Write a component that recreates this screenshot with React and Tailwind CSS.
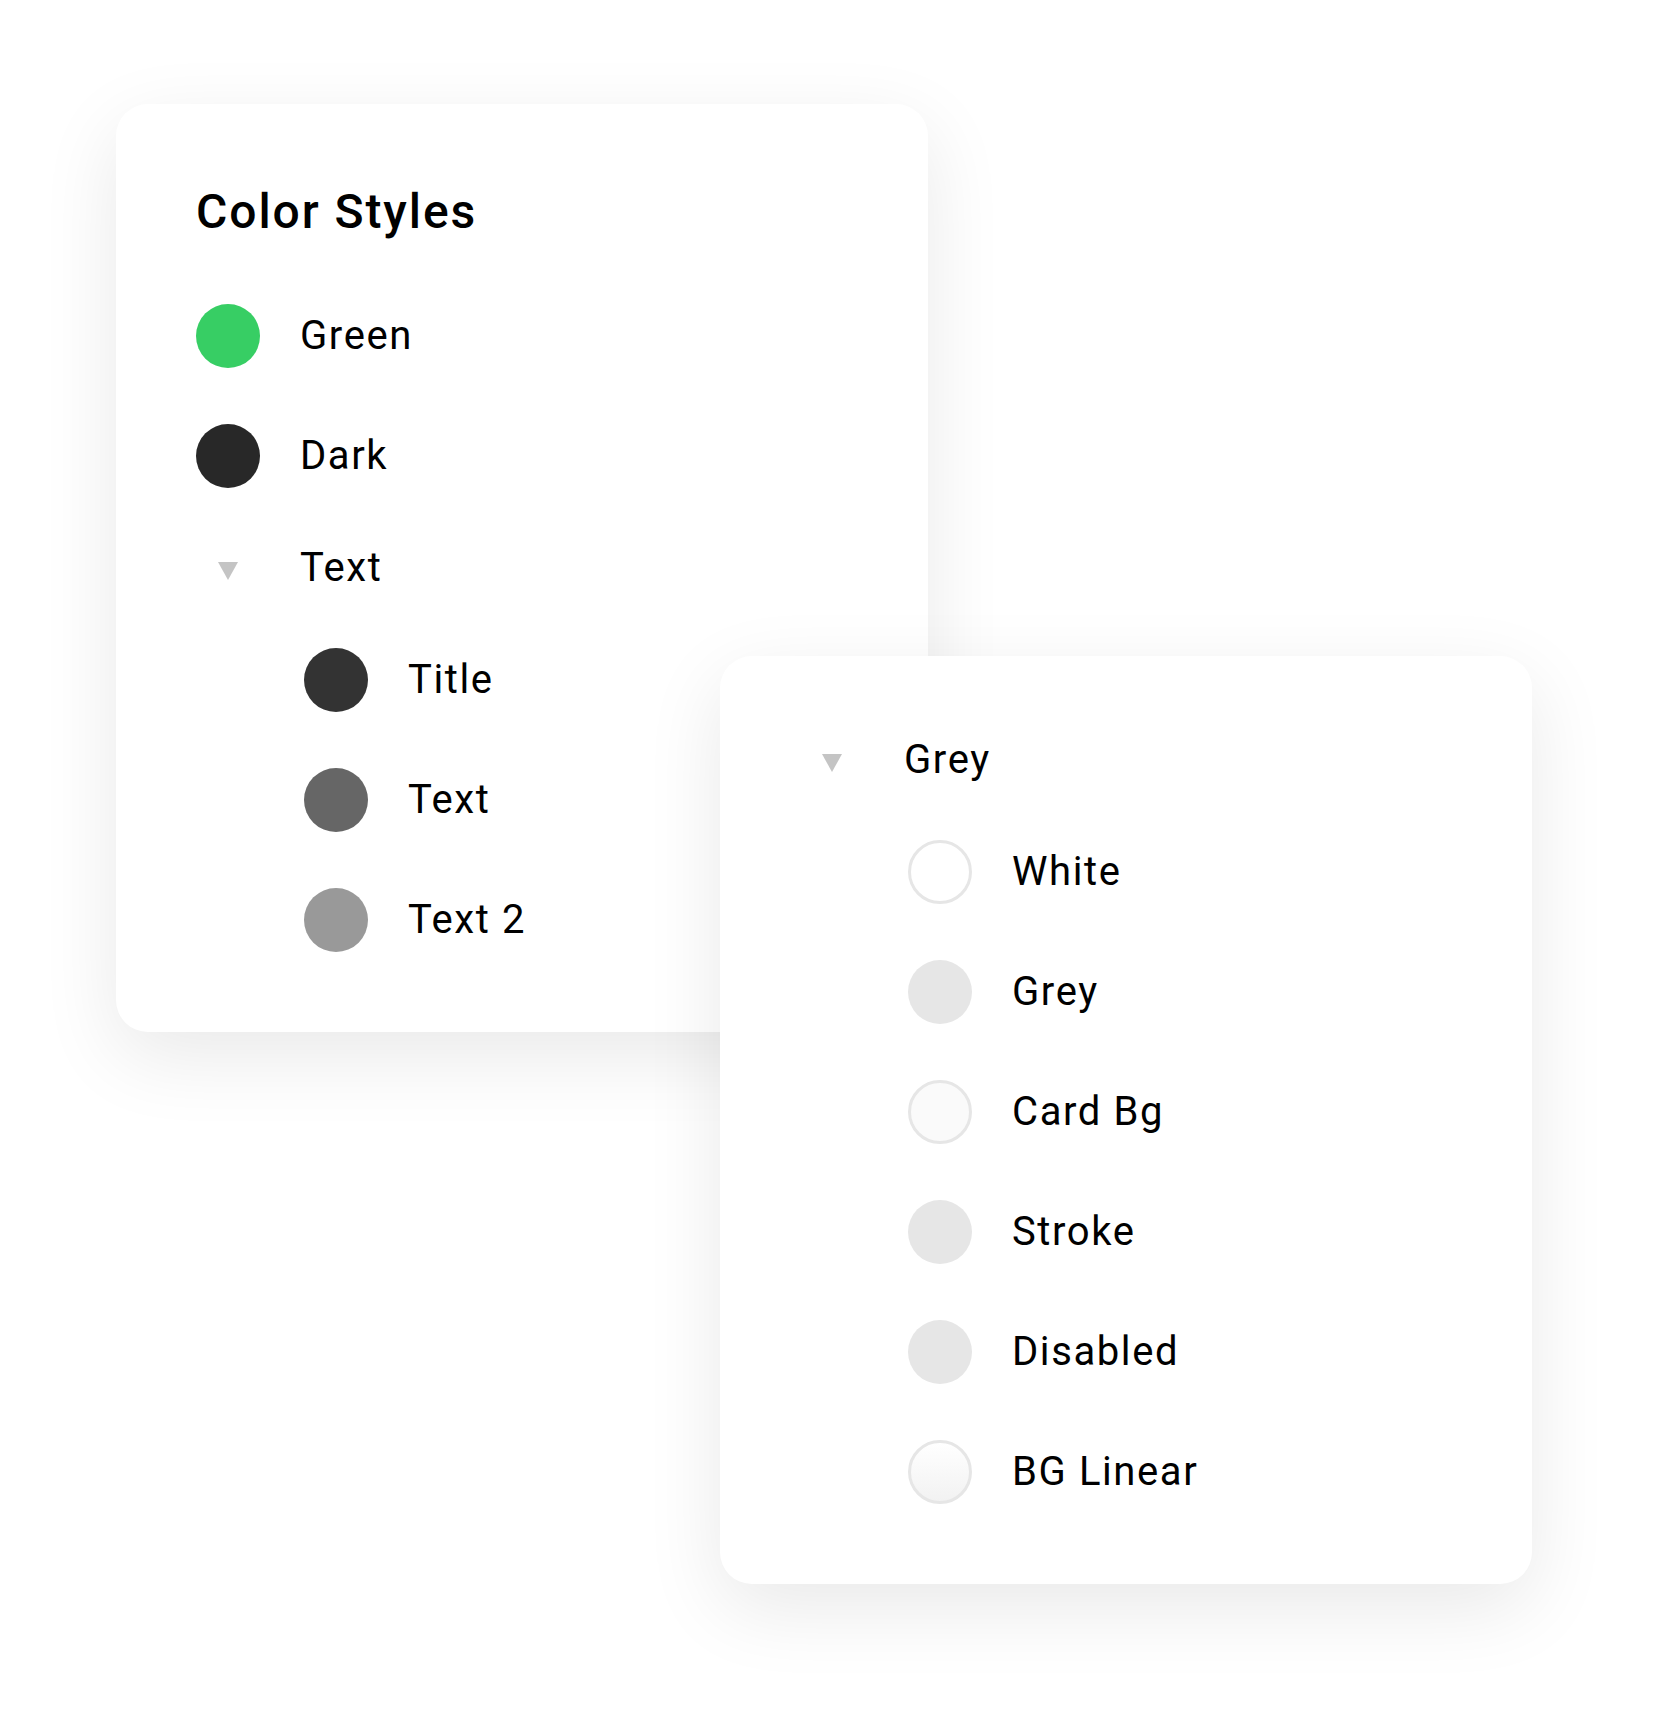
import React from "react";

function Swatch({ kind }) {
  const map = {
    green: "bg-[#37CE64]",
    dark: "bg-[#282828]",
    title: "bg-[#333333]",
    text: "bg-[#666666]",
    text2: "bg-[#999999]",
    white: "bg-white border-[3px] border-[#E6E6E6]",
    grey: "bg-[#E6E6E6]",
    cardbg: "bg-[#FAFAFA] border-[3px] border-[#E6E6E6]",
    stroke: "bg-[#E6E6E6]",
    disabled: "bg-[#E6E6E6]",
    linear: "bg-gradient-to-b from-white to-[#F2F2F2] border-[3px] border-[#E6E6E6]",
  };
  return <div className={"w-16 h-16 rounded-full shrink-0 " + map[kind]} />;
}

function Row({ kind, label }) {
  return (
    <div className="flex items-center h-16 gap-10">
      <Swatch kind={kind} />
      <span className="text-[40px] leading-[48px] tracking-[0.04em] text-black">{label}</span>
    </div>
  );
}

function GroupRow({ label }) {
  return (
    <div className="flex items-center h-12 gap-10">
      <div className="w-16 flex justify-center shrink-0">
        <svg width="20" height="18" viewBox="0 0 20 18" className="mt-1.5">
          <polygon points="0,0 20,0 10,18" fill="#C4C4C4" />
        </svg>
      </div>
      <span className="text-[40px] leading-[48px] tracking-[0.04em] text-black">{label}</span>
    </div>
  );
}

export default function App() {
  return (
    <div
      className="w-[1656px] h-[1720px] bg-white flex flex-col pt-[104px] pl-[116px]"
      style={{ fontFamily: "Roboto, 'Noto Sans', sans-serif" }}
    >
      <div className="w-[812px] h-[928px] bg-white rounded-[32px] shadow-[0_24px_80px_rgba(0,0,0,0.09)] p-20 flex flex-col gap-14 shrink-0">
        <h1 className="text-[48px] leading-[56px] font-medium tracking-[0.04em] text-black mb-2">Color Styles</h1>
        <Row kind="green" label="Green" />
        <Row kind="dark" label="Dark" />
        <GroupRow label="Text" />
        <div className="pl-[108px] flex flex-col gap-14">
          <Row kind="title" label="Title" />
          <Row kind="text" label="Text" />
          <Row kind="text2" label="Text 2" />
        </div>
      </div>
      <div className="relative -mt-[376px] ml-[604px] w-[812px] h-[928px] bg-white rounded-[32px] shadow-[0_24px_80px_rgba(0,0,0,0.09)] p-20 flex flex-col gap-14 shrink-0">
        <GroupRow label="Grey" />
        <div className="pl-[108px] flex flex-col gap-14">
          <Row kind="white" label="White" />
          <Row kind="grey" label="Grey" />
          <Row kind="cardbg" label="Card Bg" />
          <Row kind="stroke" label="Stroke" />
          <Row kind="disabled" label="Disabled" />
          <Row kind="linear" label="BG Linear" />
        </div>
      </div>
    </div>
  );
}
